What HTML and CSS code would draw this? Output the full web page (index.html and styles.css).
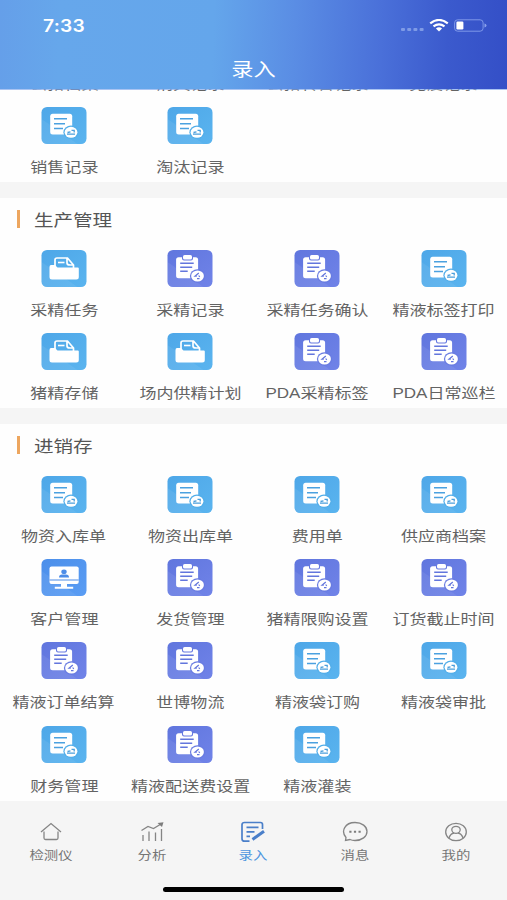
FILE: index.html
```
<!DOCTYPE html>
<html lang="zh-CN">
<head>
<meta charset="utf-8">
<title>录入</title>
<link rel="stylesheet" href="styles.css">
</head>
<body>
<svg class="defs" width="0" height="0">
  <defs>
    <linearGradient id="g-sky" x1="0" y1="0" x2="1" y2="1"><stop offset="0" stop-color="#4ea7e8"/><stop offset="1" stop-color="#5ab4ef"/></linearGradient>
    <linearGradient id="g-violet" x1="0" y1="0" x2="1" y2="1"><stop offset="0" stop-color="#6076de"/><stop offset="1" stop-color="#7083e8"/></linearGradient>
    <linearGradient id="g-blue" x1="0" y1="0" x2="1" y2="1"><stop offset="0" stop-color="#4c8fea"/><stop offset="1" stop-color="#5a9df4"/></linearGradient>
  </defs>
  <symbol id="doc" viewBox="0 0 45 37">
    <rect width="45" height="37" rx="5.500" fill="url(#g-sky)"/>
    <path d="M0 12L36 37H5.500Q0 37 0 31.500Z" fill="#fff" opacity=".07"/>
    <rect x="8.700" y="6.700" width="22" height="20.800" rx="2.500" fill="#fff"/>
    <path d="M12.500 11.800h13M12.500 16.700h11M12.500 21.500h9" stroke="#4ba1e0" stroke-width="1.500"/>
    <ellipse cx="29.500" cy="25.300" rx="7.600" ry="6.700" fill="#53aee9"/>
    <ellipse cx="29.500" cy="25.300" rx="6.400" ry="5.500" fill="#fff"/>
    <path d="M25.500 27.200h8M26 25.500l3-.7M30 23.300h2.700v2.200" fill="none" stroke="#4b9fdc" stroke-width="1.300"/>
  </symbol>
  <symbol id="clip" viewBox="0 0 45 37">
    <rect width="45" height="37" rx="5.500" fill="url(#g-violet)"/>
    <path d="M0 12L36 37H5.500Q0 37 0 31.500Z" fill="#fff" opacity=".07"/>
    <rect x="8.600" y="7.200" width="22" height="21" rx="2.500" fill="#fff"/>
    <rect x="14.500" y="4.500" width="11" height="6" rx="2" fill="#6679e0"/>
    <rect x="15.500" y="5" width="9" height="4.600" rx="1.600" fill="#fff"/>
    <path d="M12.700 13.300h13.500M12.700 17.300h12M12.700 21.300h7.500" stroke="#6376dd" stroke-width="1.400"/>
    <ellipse cx="30" cy="26" rx="7.600" ry="6.700" fill="#687be1"/>
    <ellipse cx="30" cy="26" rx="6.400" ry="5.500" fill="#fff"/>
    <path d="M31.300 23l-3.800 3.200h1.800M29.500 28.600h2.500M31.200 25.500l1 1.500" fill="none" stroke="#6376dd" stroke-width="1.200"/>
  </symbol>
  <symbol id="folder" viewBox="0 0 45 37">
    <rect width="45" height="37" rx="5.500" fill="url(#g-sky)"/>
    <path d="M0 12L36 37H5.500Q0 37 0 31.500Z" fill="#fff" opacity=".07"/>
    <path d="M13.500 16V10q0-2 2-2h10.500l6 7v3M25.500 8.500v4.500q0 2 3 2h3" fill="none" stroke="#fff" stroke-width="1.700"/>
    <path d="M16.500 12.500h6.500" stroke="#fff" stroke-width="1.600"/>
    <path d="M8 17q0-2 1.500-2h4l2.500 2.500h20.300q1 0 1 1V27q0 2.500-2.500 2.500H10.500Q8 29.500 8 27Z" fill="#fff"/>
  </symbol>
  <symbol id="screen" viewBox="0 0 45 37">
    <rect width="45" height="37" rx="5.500" fill="url(#g-blue)"/>
    <path d="M0 12L36 37H5.500Q0 37 0 31.500Z" fill="#fff" opacity=".07"/>
    <rect x="8" y="7.500" width="29.200" height="17.500" rx="2" fill="#fff"/>
    <path d="M8 21h29.200" stroke="#4d8de8" stroke-width="1"/>
    <ellipse cx="22.500" cy="12.700" rx="2.700" ry="2.300" fill="#4d8de8"/>
    <path d="M17.500 18.500q0-3 3-3h4q3 0 3 3Z" fill="#4d8de8"/>
    <path d="M19.500 25h6v2.700h6.200v2H13.300v-2h6.200Z" fill="#fff"/>
  </symbol>
</svg>
<div class="app">
  <header class="header">
    <div class="status">
      <span class="time">7:33</span>
      <div class="signals">
        <svg width="24" height="6" viewBox="0 0 24 6"><g fill="#7f9be6"><rect x="0" y="1" width="4" height="3" rx="1"/><rect x="6.200" y="1" width="4" height="3" rx="1"/><rect x="12.400" y="1" width="4" height="3" rx="1"/><rect x="18.600" y="1" width="4" height="3" rx="1"/></g></svg>
        <svg class="wifi" width="20" height="13" viewBox="0 0 20 13"><path d="M1.200 4.300Q10-2.400 18.800 4.300M4.500 7.400Q10 3.200 15.500 7.400" fill="none" stroke="#fff" stroke-width="2.200"/><path d="M6.900 9.400Q10 7.200 13.100 9.400L10 12.500Z" fill="#fff"/></svg>
        <svg class="battery" width="33" height="13" viewBox="0 0 33 13"><rect x=".6" y=".8" width="28.500" height="11.400" rx="3" fill="none" stroke="#7f98e8"/><rect x="2.400" y="2.500" width="7" height="8" rx="1.200" fill="#fff"/><path d="M30.500 4.500q2 .5 2 2t-2 2Z" fill="#8ba2ec"/></svg>
      </div>
    </div>
    <h1 class="title"><span class="wide">录入</span></h1>
  </header>

  <main class="content">
    <section class="panel panel-first">
      <div class="grid">
        <div class="item"><svg class="icon"><use href="#doc"/></svg><span class="wide">公猪档案</span></div>
        <div class="item"><svg class="icon"><use href="#doc"/></svg><span class="wide">消失记录</span></div>
        <div class="item"><svg class="icon"><use href="#doc"/></svg><span class="wide">公猪转舍记录</span></div>
        <div class="item"><svg class="icon"><use href="#doc"/></svg><span class="wide">免疫记录</span></div>
        <div class="item"><svg class="icon"><use href="#doc"/></svg><span class="wide">销售记录</span></div>
        <div class="item"><svg class="icon"><use href="#doc"/></svg><span class="wide">淘汰记录</span></div>
      </div>
    </section>

    <section class="panel">
      <h2 class="heading"><span class="wide">生产管理</span></h2>
      <div class="grid">
        <div class="item"><svg class="icon"><use href="#folder"/></svg><span class="wide">采精任务</span></div>
        <div class="item"><svg class="icon"><use href="#clip"/></svg><span class="wide">采精记录</span></div>
        <div class="item"><svg class="icon"><use href="#clip"/></svg><span class="wide">采精任务确认</span></div>
        <div class="item"><svg class="icon"><use href="#doc"/></svg><span class="wide">精液标签打印</span></div>
        <div class="item"><svg class="icon"><use href="#folder"/></svg><span class="wide">猪精存储</span></div>
        <div class="item"><svg class="icon"><use href="#folder"/></svg><span class="wide">场内供精计划</span></div>
        <div class="item"><svg class="icon"><use href="#clip"/></svg><span class="wide">PDA采精标签</span></div>
        <div class="item"><svg class="icon"><use href="#clip"/></svg><span class="wide">PDA日常巡栏</span></div>
      </div>
    </section>

    <section class="panel">
      <h2 class="heading"><span class="wide">进销存</span></h2>
      <div class="grid">
        <div class="item"><svg class="icon"><use href="#doc"/></svg><span class="wide">物资入库单</span></div>
        <div class="item"><svg class="icon"><use href="#doc"/></svg><span class="wide">物资出库单</span></div>
        <div class="item"><svg class="icon"><use href="#doc"/></svg><span class="wide">费用单</span></div>
        <div class="item"><svg class="icon"><use href="#doc"/></svg><span class="wide">供应商档案</span></div>
        <div class="item"><svg class="icon"><use href="#screen"/></svg><span class="wide">客户管理</span></div>
        <div class="item"><svg class="icon"><use href="#clip"/></svg><span class="wide">发货管理</span></div>
        <div class="item"><svg class="icon"><use href="#clip"/></svg><span class="wide">猪精限购设置</span></div>
        <div class="item"><svg class="icon"><use href="#clip"/></svg><span class="wide">订货截止时间</span></div>
        <div class="item"><svg class="icon"><use href="#clip"/></svg><span class="wide">精液订单结算</span></div>
        <div class="item"><svg class="icon"><use href="#clip"/></svg><span class="wide">世博物流</span></div>
        <div class="item"><svg class="icon"><use href="#doc"/></svg><span class="wide">精液袋订购</span></div>
        <div class="item"><svg class="icon"><use href="#doc"/></svg><span class="wide">精液袋审批</span></div>
        <div class="item"><svg class="icon"><use href="#doc"/></svg><span class="wide">财务管理</span></div>
        <div class="item"><svg class="icon"><use href="#clip"/></svg><span class="wide">精液配送费设置</span></div>
        <div class="item"><svg class="icon"><use href="#doc"/></svg><span class="wide">精液灌装</span></div>
      </div>
    </section>
  </main>

  <footer class="footer">
    <nav class="tabs">
      <div class="tab"><svg width="26" height="22" viewBox="0 0 26 22"><path d="M3 11L13 2.500 23 11M6 10.500V17q0 1.500 1.500 1.500h11q1.500 0 1.500-1.500v-6.500"/></svg><span class="wide">检测仪</span></div>
      <div class="tab"><svg width="26" height="22" viewBox="0 0 26 22"><path d="M4 14V20M10 10.500V20M16.500 11.500V20M22.500 8V20M2.500 9.500L9 5.500l5.500 2L22 3"/><path class="solid" d="M18.500 2L24.500 1.200 23 6Z"/></svg><span class="wide">分析</span></div>
      <div class="tab active"><svg width="26" height="22" viewBox="0 0 26 22"><path d="M9.500 20.200H4.500Q2 20.200 2 17.800V3.800Q2 1.500 4.500 1.500h16Q22.500 1.500 22.500 3.500V8M6.500 6.300h12M6.500 10.800h8M6.500 15.300h3.500"/><path class="pen" d="M12.500 18.500L24 10.200"/></svg><span class="wide">录入</span></div>
      <div class="tab"><svg width="26" height="22" viewBox="0 0 26 22"><path d="M4 16.500C-1.500 10 3 1.500 13 1.500c7 0 12 4 12 9s-5 9-12 9q-3 0-5-1l-4.500 1Z"/><path class="solid" d="M7.300 9.700h2.200v2H7.300ZM11.900 9.700h2.200v2h-2.200ZM16.500 9.700h2.200v2h-2.200Z"/></svg><span class="wide">消息</span></div>
      <div class="tab"><svg width="26" height="22" viewBox="0 0 26 22"><ellipse cx="13" cy="11" rx="10.300" ry="8.700"/><ellipse cx="13" cy="8.800" rx="4.200" ry="3.500"/><path d="M6 17q1.500-4.500 5-5M20 17q-1.500-4.500-5-5"/></svg><span class="wide">我的</span></div>
    </nav>
    <div class="home-bar"></div>
  </footer>
</div>
</body>
</html>
```
FILE: styles.css
```
* {
  box-sizing: border-box;
}

body {
  margin: 0;
  font-family: "Liberation Sans", "Noto Sans CJK SC", sans-serif;
  color: #636363;
  background: #f5f5f5;
}

.defs {
  display: block;
}

.app {
  display: flex;
  flex-direction: column;
  width: 507px;
  height: 900px;
  overflow: hidden;
}

.wide {
  display: inline-block;
  white-space: nowrap;
  transform: scaleX(1.2);
}

.header {
  position: relative;
  z-index: 1;
  flex: none;
  height: 89px;
  color: #fff;
  background: linear-gradient(92deg, #659fe9 0%, #66a7eb 12%, #64a6eb 42%, #5a8de4 58%, #4a70d9 75%, #3b5acd 88%, #344fc7 100%);
  box-shadow: 0 1px 0 rgba(125, 165, 235, 0.65);
}

.status {
  display: flex;
  align-items: center;
  justify-content: space-between;
  height: 51px;
  padding: 0 20px 0 43px;
}

.time {
  font: 600 17px/20px Inter, sans-serif;
  letter-spacing: 0.2px;
  transform: scaleX(1.13);
  transform-origin: left;
}

.signals {
  display: flex;
  align-items: center;
}

.signals svg:first-child {
  margin-top: 8px;
}

.wifi {
  margin: 0 5px 0 4px;
}

.title {
  margin: 0;
  padding: 5px 0 0 1px;
  font-size: 18.5px;
  font-weight: 400;
  line-height: 27px;
  text-align: center;
}

.content {
  display: flex;
  flex: none;
  flex-direction: column;
  gap: 16px;
  height: 712px;
}

.panel {
  flex: none;
  padding-bottom: 4.700px;
  background: #fefefe;
}

.panel:last-child {
  flex: 1;
}

.panel-first {
  margin-top: -65.300px;
}

.heading {
  display: flex;
  align-items: center;
  height: 52px;
  margin: 0;
  padding: 0 0 9px 17px;
  font-size: 16.300px;
  font-weight: 400;
  color: #555;
}

.heading::before {
  content: "";
  width: 3px;
  height: 18px;
  margin-right: 14px;
  background: #eda65f;
}

.heading .wide {
  transform-origin: left;
}

.grid {
  display: grid;
  grid-template-columns: repeat(4, 1fr);
  row-gap: 13.300px;
  padding-left: 0.6px;
}

.item {
  display: flex;
  flex-direction: column;
  align-items: center;
  gap: 13px;
  min-width: 0;
  height: 70px;
  font-size: 14.200px;
  line-height: 20px;
}

.icon {
  flex: none;
  width: 46px;
  height: 37px;
}

.footer {
  display: flex;
  flex: none;
  flex-direction: column;
  align-items: center;
  height: 99px;
  background: #f5f5f5;
}

.tabs {
  display: grid;
  grid-template-columns: repeat(5, 1fr);
  width: 100%;
  height: 86px;
  padding-top: 20px;
}

.tab {
  display: flex;
  flex-direction: column;
  align-items: center;
  gap: 4px;
  color: #757575;
  font-size: 12px;
  line-height: 18px;
}

.tab svg {
  fill: none;
  stroke: #858585;
  stroke-width: 1.300;
}

.tab .solid {
  fill: #7d7d7d;
  stroke: none;
}

.tab.active {
  color: #4c96df;
}

.tab.active svg {
  stroke: #4a7fc9;
  stroke-width: 1.700;
}

.tab.active .pen {
  stroke-width: 3;
}

.home-bar {
  width: 181px;
  height: 5px;
  border-radius: 3px;
  background: #000;
}
```
